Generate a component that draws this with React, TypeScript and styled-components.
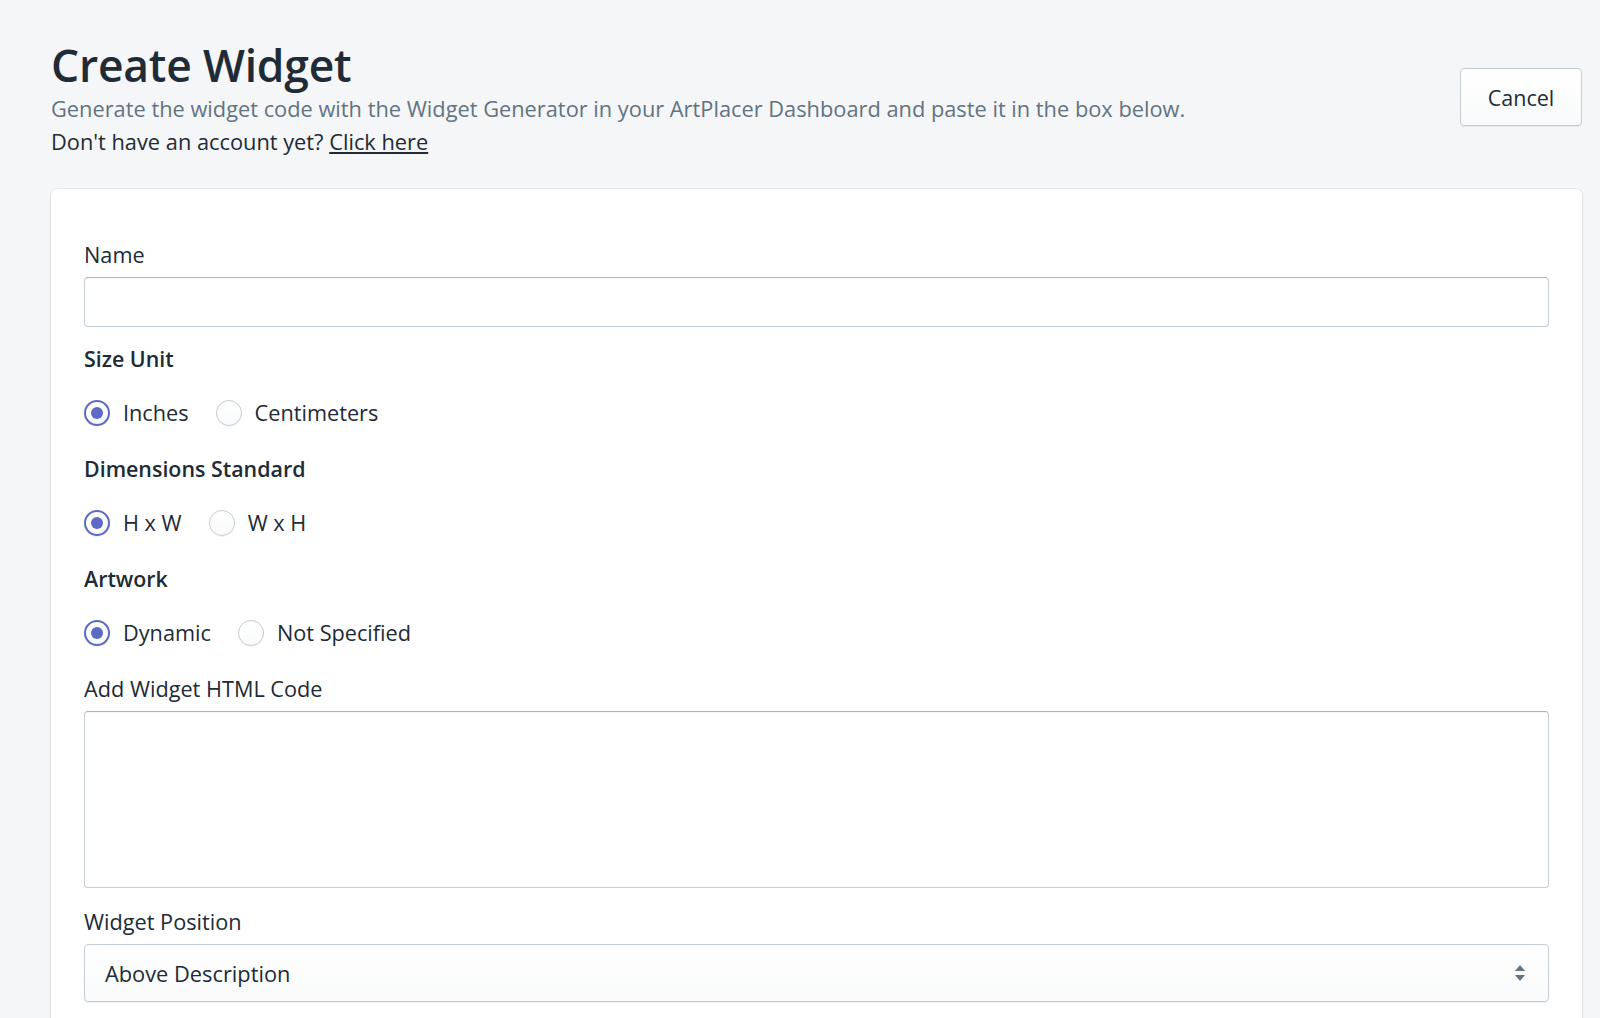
import React, { useState } from 'react';
import styled, { createGlobalStyle } from 'styled-components';

const GlobalStyle = createGlobalStyle`
  * { box-sizing: border-box; }
  html, body {
    margin: 0;
    padding: 0;
    background: #f4f6f8;
    color: #212b36;
    font-family: "Open Sans", "Noto Sans", "Liberation Sans", sans-serif;
  }
`;

const Page = styled.div`
  padding: 38px 18px 40px 51px;
`;

const Header = styled.header`
  display: flex;
  justify-content: space-between;
  align-items: flex-start;
`;

const TitleBlock = styled.div`
  display: flex;
  flex-direction: column;
`;

const Title = styled.h1`
  margin: 0;
  font-size: 44.4px;
  line-height: 54px;
  font-weight: 600;
  color: #212b36;
  letter-spacing: -0.2px;
`;

const Subtitle = styled.p`
  margin: 0;
  font-size: 21.8px;
  line-height: 33px;
  color: #637381;
`;

const Note = styled.p`
  margin: 0;
  font-size: 21.8px;
  line-height: 33px;
  color: #212b36;

  a {
    color: #212b36;
    text-decoration: underline;
  }
`;

const CancelButton = styled.button`
  margin-top: 30px;
  width: 122px;
  height: 58px;
  background: linear-gradient(180deg, #fff, #f9fafb);
  border: 1px solid #c4cdd5;
  border-radius: 4px;
  box-shadow: 0 1px 0 rgba(22, 29, 37, 0.05);
  font-family: inherit;
  font-size: 21.5px;
  color: #212b36;
  cursor: pointer;
`;

const Card = styled.section`
  margin-top: 31px;
  background: #fff;
  border-radius: 6px;
  box-shadow: 0 0 0 1px rgba(63, 63, 68, 0.05), 0 1px 3px rgba(63, 63, 68, 0.15);
  padding: 51px 33px 40px;
`;

const Form = styled.div`
  display: flex;
  flex-direction: column;
  gap: 17px;
`;

const Field = styled.div<{ $extraTop?: number }>`
  display: flex;
  flex-direction: column;
  gap: 7px;
  margin-top: ${p => p.$extraTop ?? 0}px;
`;

const Label = styled.label`
  font-size: 21.7px;
  line-height: 30px;
  color: #212b36;
`;

const Heading = styled.div`
  font-size: 21.4px;
  line-height: 30px;
  font-weight: 600;
  color: #212b36;
`;

const TextInput = styled.input`
  height: 50px;
  width: 100%;
  border: 1px solid #c4cdd5;
  border-top-color: #aeb4b9;
  border-radius: 4px;
  box-shadow: inset 0 1px 0 0 rgba(99, 115, 129, 0.05);
  padding: 0 18px;
  font-family: inherit;
  font-size: 21.7px;
  outline: none;
`;

const TextArea = styled.textarea`
  height: 177px;
  width: 100%;
  resize: none;
  border: 1px solid #c4cdd5;
  border-top-color: #aeb4b9;
  border-radius: 4px;
  box-shadow: inset 0 1px 0 0 rgba(99, 115, 129, 0.05);
  padding: 12px 18px;
  font-family: inherit;
  font-size: 21.7px;
  outline: none;
`;

const RadioSection = styled.div`
  display: flex;
  flex-direction: column;
  gap: 24px;
  padding-bottom: 9px;
`;

const RadioRow = styled.div`
  display: flex;
  align-items: center;
  gap: 27px;
`;

const RadioOption = styled.label`
  display: flex;
  align-items: center;
  gap: 13px;
  font-size: 21.7px;
  line-height: 30px;
  color: #212b36;
  cursor: pointer;
`;

const RadioCircle = styled.span<{ $checked: boolean }>`
  position: relative;
  width: 26px;
  height: 26px;
  border-radius: 50%;
  flex-shrink: 0;
  background: linear-gradient(180deg, #fff, #f9fafb);
  border: ${p => (p.$checked ? '2px solid #5c6ac4' : '1px solid #c4cdd5')};
  box-shadow: 0 1px 0 0 rgba(22, 29, 37, 0.05);

  &::after {
    content: '';
    display: ${p => (p.$checked ? 'block' : 'none')};
    position: absolute;
    left: 50%;
    top: 50%;
    width: 12px;
    height: 12px;
    margin: -6px 0 0 -6px;
    border-radius: 50%;
    background: #5c6ac4;
  }
`;

const SelectWrap = styled.div`
  position: relative;
  height: 58px;
  border: 1px solid #c4cdd5;
  border-radius: 4px;
  background: linear-gradient(180deg, #fff, #f9fafb);
  box-shadow: 0 1px 0 0 rgba(22, 29, 37, 0.05);
  display: flex;
  align-items: center;
  padding: 0 20px;
  font-size: 21.8px;
  color: #212b36;
`;

const SelectArrows = styled.svg`
  position: absolute;
  right: 22px;
  top: 50%;
  margin-top: -10px;
`;

type Option = { value: string; label: string };

const RadioGroup: React.FC<{
  title: string;
  options: Option[];
  value: string;
  onChange: (v: string) => void;
}> = ({ title, options, value, onChange }) => (
  <RadioSection>
    <Heading>{title}</Heading>
    <RadioRow>
      {options.map(o => (
        <RadioOption key={o.value} onClick={() => onChange(o.value)}>
          <RadioCircle $checked={value === o.value} />
          {o.label}
        </RadioOption>
      ))}
    </RadioRow>
  </RadioSection>
);

const App: React.FC = () => {
  const [unit, setUnit] = useState('in');
  const [dims, setDims] = useState('hw');
  const [artwork, setArtwork] = useState('dynamic');

  return (
    <>
      <GlobalStyle />
      <Page>
        <Header>
          <TitleBlock>
            <Title>Create Widget</Title>
            <Subtitle>
              Generate the widget code with the Widget Generator in your ArtPlacer Dashboard and paste it in the box below.
            </Subtitle>
            <Note>
              Don't have an account yet? <a href="#">Click here</a>
            </Note>
          </TitleBlock>
          <CancelButton>Cancel</CancelButton>
        </Header>

        <Card>
          <Form>
            <Field>
              <Label>Name</Label>
              <TextInput />
            </Field>

            <RadioGroup
              title="Size Unit"
              value={unit}
              onChange={setUnit}
              options={[
                { value: 'in', label: 'Inches' },
                { value: 'cm', label: 'Centimeters' },
              ]}
            />
            <RadioGroup
              title="Dimensions Standard"
              value={dims}
              onChange={setDims}
              options={[
                { value: 'hw', label: 'H x W' },
                { value: 'wh', label: 'W x H' },
              ]}
            />
            <RadioGroup
              title="Artwork"
              value={artwork}
              onChange={setArtwork}
              options={[
                { value: 'dynamic', label: 'Dynamic' },
                { value: 'none', label: 'Not Specified' },
              ]}
            />

            <Field>
              <Label>Add Widget HTML Code</Label>
              <TextArea />
            </Field>

            <Field $extraTop={2}>
              <Label>Widget Position</Label>
              <SelectWrap>
                Above Description
                <SelectArrows width="12" height="20" viewBox="0 0 12 20">
                  <path d="M6 2 L11 8 H1 Z" fill="#637381" />
                  <path d="M6 18 L11 12 H1 Z" fill="#637381" />
                </SelectArrows>
              </SelectWrap>
            </Field>
          </Form>
        </Card>
      </Page>
    </>
  );
};

export default App;
